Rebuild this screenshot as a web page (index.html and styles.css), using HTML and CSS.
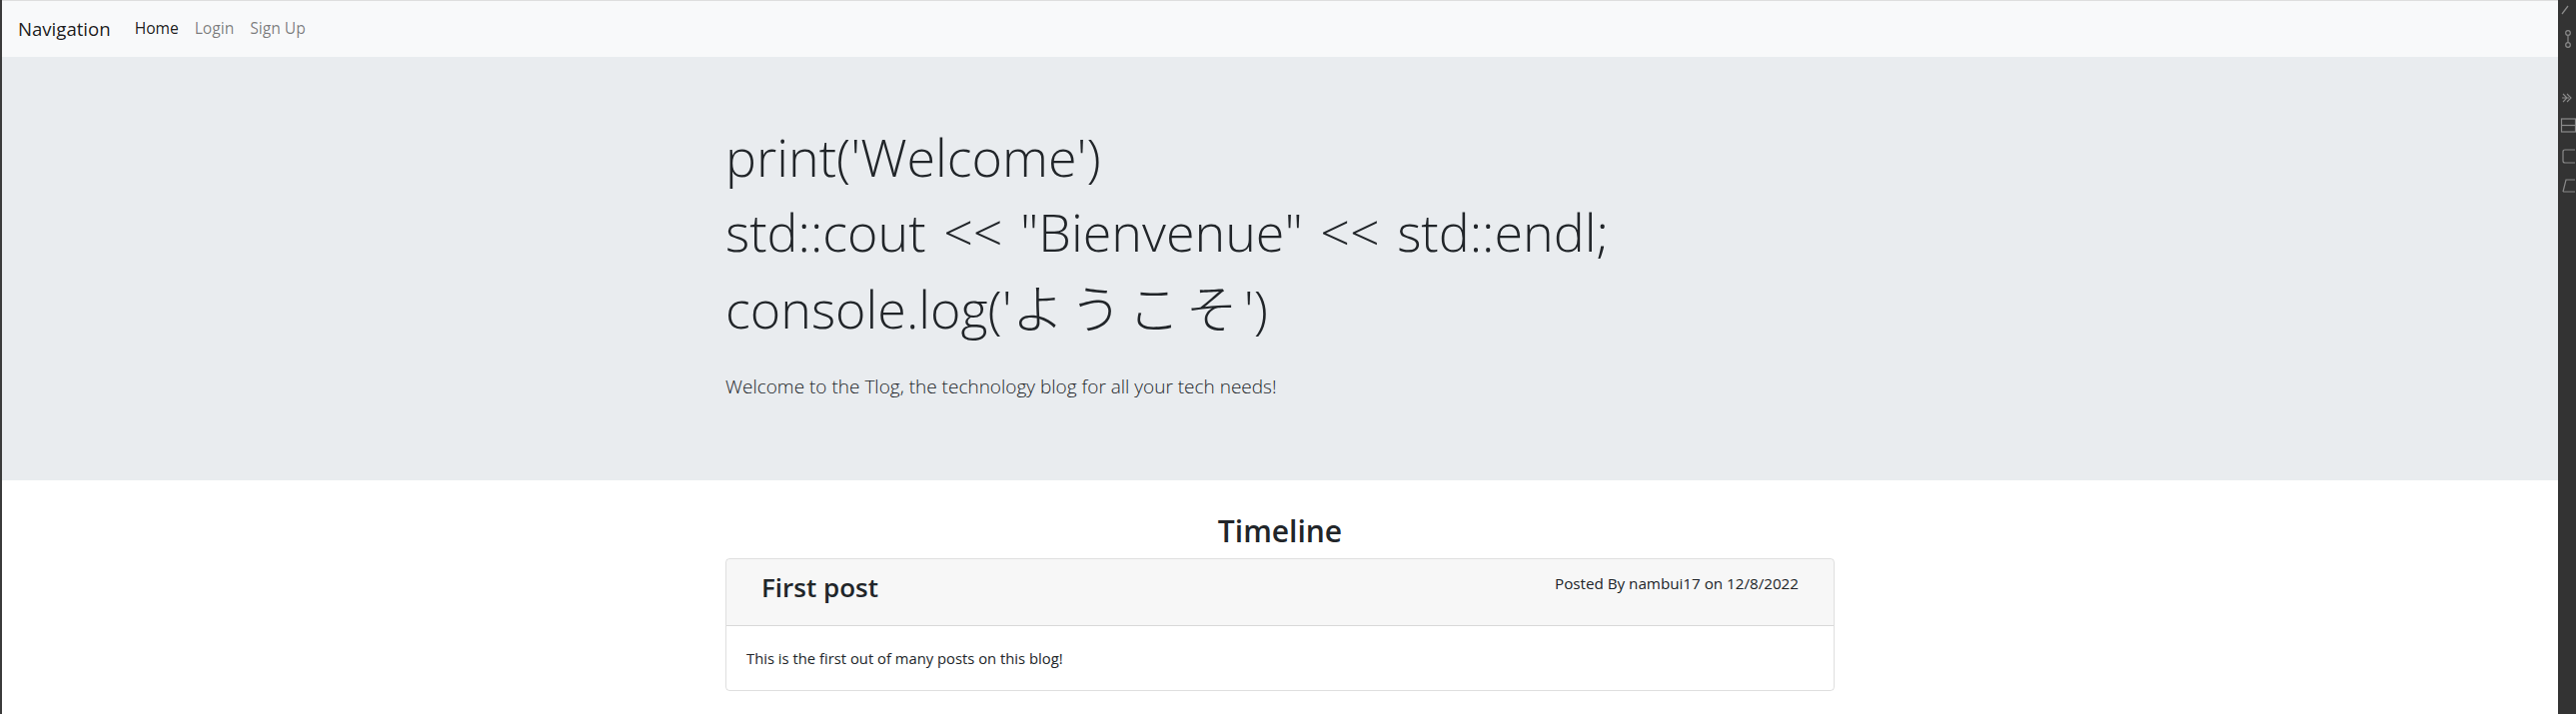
FILE: index.html
```html
<!DOCTYPE html>
<html lang="en">
<head>
<meta charset="utf-8">
<title>Tlog</title>
<link rel="stylesheet" href="styles.css">
</head>
<body>
<div class="frame">
  <div class="edge-left"></div>
  <div class="page">
    <nav class="navbar">
      <a class="brand" href="#">Navigation</a>
      <ul class="nav">
        <li><a class="nav-link active" href="#">Home</a></li>
        <li><a class="nav-link" href="#">Login</a></li>
        <li><a class="nav-link" href="#">Sign Up</a></li>
      </ul>
    </nav>
    <header class="jumbotron">
      <div class="container">
        <h1 class="display">print('Welcome')<br>std::cout &lt;&lt; "Bienvenue" &lt;&lt; std::endl;<br>console.log('<span class="jp">ようこそ</span>')</h1>
        <p class="lead">Welcome to the Tlog, the technology blog for all your tech needs!</p>
      </div>
    </header>
    <main class="container">
      <h2 class="timeline-title">Timeline</h2>
      <div class="card">
        <div class="card-header">
          <div class="row">
            <div class="col"><h3 class="post-title">First post</h3></div>
            <div class="col col-meta">Posted By nambui17 on 12/8/2022</div>
          </div>
        </div>
        <div class="card-body">
          <p class="post-text">This is the first out of many posts on this blog!</p>
        </div>
      </div>
    </main>
  </div>
  <aside class="edge-right">
    <svg class="tool" width="18" height="16" viewBox="0 0 18 16"><path d="M3 12 L9 4" stroke="#8a8a8a" stroke-width="1.3" fill="none"/></svg>
    <svg class="tool" width="18" height="22" viewBox="0 0 18 22"><circle cx="9" cy="5" r="2.3" stroke="#8a8a8a" stroke-width="1.2" fill="none"/><circle cx="9" cy="17" r="2.3" stroke="#8a8a8a" stroke-width="1.2" fill="none"/><path d="M9 7.5 V14.5" stroke="#8a8a8a" stroke-width="1.2"/></svg>
    <svg class="tool gap" width="18" height="16" viewBox="0 0 18 16"><path d="M4 4 L8 8 L4 12 M3 8 H10 M8 4 L12 8 L8 12" stroke="#8a8a8a" stroke-width="1.1" fill="none"/></svg>
    <svg class="tool" width="18" height="20" viewBox="0 0 18 20"><rect x="2.5" y="3" width="14" height="13" stroke="#8a8a8a" stroke-width="1.2" fill="none"/><path d="M2.5 9.5 H16" stroke="#8a8a8a" stroke-width="1.2"/></svg>
    <svg class="tool" width="18" height="20" viewBox="0 0 18 20"><path d="M6 4 Q4 4 4 6 V15 Q4 17 6 17 H16 M6 4 H16" stroke="#8a8a8a" stroke-width="1.2" fill="none"/></svg>
    <svg class="tool" width="18" height="20" viewBox="0 0 18 20"><path d="M4 16 L7 4 H16 M4 16 H16" stroke="#8a8a8a" stroke-width="1.2" fill="none"/></svg>
  </aside>
</div>
</body>
</html>
```
FILE: styles.css
```css
* { box-sizing: border-box; }
html, body { margin: 0; padding: 0; }
body {
  font-family: "Open Sans", "Noto Sans CJK JP", sans-serif;
  font-size: 16px;
  line-height: 1.5;
  color: #212529;
  background: #ffffff;
  height: 715px;
  overflow: hidden;
}
.frame {
  display: flex;
  height: 715px;
}
.edge-left {
  width: 2px;
  flex: 0 0 2px;
  background: #3b3b3b;
}
.edge-right {
  width: 18px;
  flex: 0 0 18px;
  background: #333333;
  display: flex;
  flex-direction: column;
  align-items: flex-start;
  padding-top: 2px;
  overflow: hidden;
}
.tool { display: block; margin-left: 1px; margin-bottom: 10px; }
.tool.gap { margin-top: 30px; }
.page {
  flex: 1 1 auto;
  min-width: 0;
  border-top: 1px solid #dedede;
}
.navbar {
  display: flex;
  align-items: center;
  height: 56px;
  padding: 8px 16px;
  background: #f8f9fa;
}
.brand {
  font-size: 18.6px;
  line-height: 30px;
  margin-right: 16px;
  color: rgba(0, 0, 0, 0.9);
  text-decoration: none;
}
.nav {
  display: flex;
  list-style: none;
  margin: 0;
  padding: 0;
}
.nav-link {
  display: block;
  padding: 8px 8px;
  font-size: 15.6px;
  color: rgba(0, 0, 0, 0.5);
  text-decoration: none;
}
.nav-link.active { color: rgba(0, 0, 0, 0.9); }
.jumbotron {
  background: #e9ecef;
  height: 424px;
  padding-top: 62px;
  margin-bottom: 32px;
}
.container {
  width: 1140px;
  margin: 0 auto;
  padding: 0 15px;
}
.display {
  margin: 0;
  font-size: 52px;
  font-weight: 300;
  line-height: 75px;
  word-spacing: 4px;
}
.jp { font-family: "Noto Sans CJK JP", sans-serif; font-weight: 300; letter-spacing: 6px; }
.lead {
  margin: 26px 0 0;
  font-size: 19px;
  font-weight: 300;
  line-height: 30px;
}
.timeline-title {
  margin: 0 0 8px;
  text-align: center;
  font-size: 30px;
  font-weight: 600;
  line-height: 38.4px;
}
.card {
  border: 1px solid rgba(0, 0, 0, 0.125);
  border-radius: 4px;
  overflow: hidden;
}
.card-header {
  background: rgba(0, 0, 0, 0.03);
  border-bottom: 1px solid rgba(0, 0, 0, 0.125);
  padding: 12px 20px;
}
.row {
  display: flex;
  justify-content: space-between;
  margin: 0;
}
.col { padding: 0 15px; }
.post-title {
  margin: 0 0 8px;
  font-size: 26px;
  font-weight: 600;
  line-height: 33.6px;
}
.col-meta {
  font-size: 15.2px;
  line-height: 24px;
}
.card-body { padding: 20px; }
.post-text {
  margin: 0;
  font-size: 14.8px;
  line-height: 24px;
}
```
